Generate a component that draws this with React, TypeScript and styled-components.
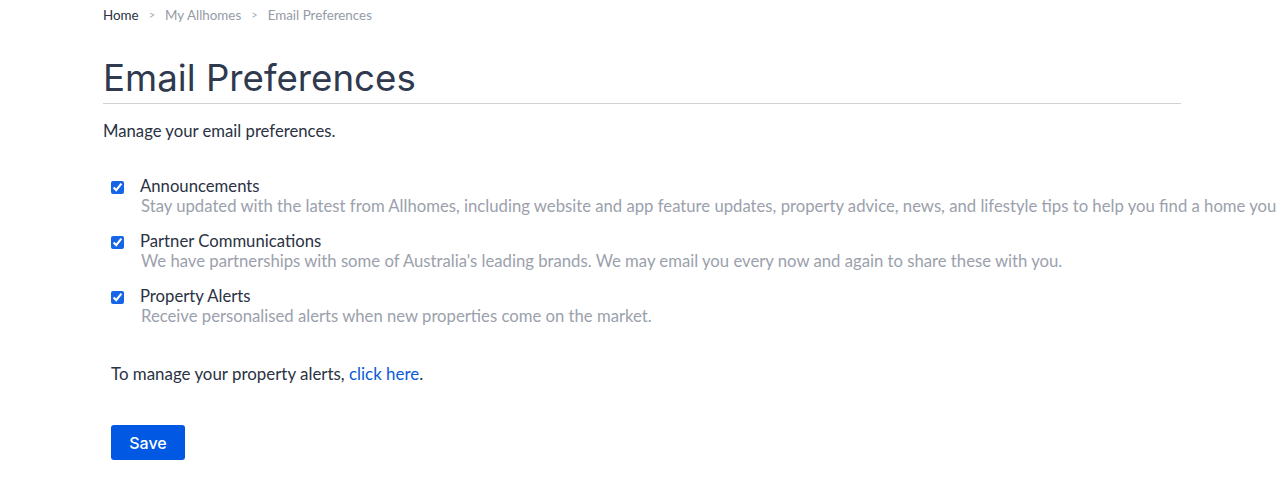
import React from "react";
import styled, { createGlobalStyle } from "styled-components";

const Global = createGlobalStyle`
  html, body { margin: 0; padding: 0; background: #fff; }
  body { font-family: "Lato", "Liberation Sans", sans-serif; color: #2d3748; overflow: hidden; }
`;

const Page = styled.div`
  padding: 0 100px 0 103px;
  width: 1078px;
`;

const Crumbs = styled.nav`
  display: flex;
  align-items: center;
  gap: 10px;
  height: 29px;
  font-size: 13.4px;
  color: #959ba6;
`;

const Crumb = styled.span<{ $active?: boolean }>`
  color: ${(p) => (p.$active ? "#2a3243" : "#959ba6")};
`;

const Sep = styled.span`
  font-size: 11px;
  color: #a7adb6;
`;

const Title = styled.h1`
  margin: 26px 0 0;
  font-family: "Inter", "Liberation Sans", sans-serif;
  font-weight: 400;
  font-size: 36.7px;
  line-height: 46px;
  color: #2f3a4f;
  padding-bottom: 2px;
  border-bottom: 1px solid #cfd2d7;
`;

const Intro = styled.p`
  margin: 15px 0 0;
  font-size: 16.7px;
  line-height: 24px;
  color: #2a3243;
`;

const List = styled.div`
  margin: 33px 0 0 8px;
  display: flex;
  flex-direction: column;
  gap: 15px;
`;

const Option = styled.label`
  display: grid;
  grid-template-columns: 29px 1fr;
  align-items: start;
`;

const Box = styled.input`
  margin: 5px 0 0 0;
  width: 13px;
  height: 13px;
  accent-color: #1565e6;
`;

const Label = styled.div`
  font-size: 16.7px;
  line-height: 20px;
  color: #2a3243;
`;

const Desc = styled.div`
  font-size: 16.7px;
  line-height: 20px;
  color: #9ba1ac;
  white-space: nowrap;
  padding-left: 1px;
`;

const Note = styled.p`
  margin: 36px 0 0 8px;
  font-size: 16.9px;
  line-height: 24px;
  color: #2a3243;
`;

const Link = styled.a`
  color: #0a5bd6;
  text-decoration: none;
`;

const Save = styled.button`
  margin: 39px 0 0 8px;
  width: 74px;
  height: 35px;
  border: none;
  border-radius: 3px;
  background: #0058e3;
  color: #fff;
  font-family: "Inter", "Liberation Sans", sans-serif;
  font-size: 16px;
  font-weight: 500;
  cursor: pointer;
`;

const options = [
  {
    title: "Announcements",
    desc: "Stay updated with the latest from Allhomes, including website and app feature updates, property advice, news, and lifestyle tips to help you find a home you love.",
  },
  {
    title: "Partner Communications",
    desc: "We have partnerships with some of Australia's leading brands. We may email you every now and again to share these with you.",
  },
  {
    title: "Property Alerts",
    desc: "Receive personalised alerts when new properties come on the market.",
  },
];

export default function App() {
  return (
    <>
      <Global />
      <Page>
        <Crumbs>
          <Crumb $active>Home</Crumb>
          <Sep>&gt;</Sep>
          <Crumb>My Allhomes</Crumb>
          <Sep>&gt;</Sep>
          <Crumb>Email Preferences</Crumb>
        </Crumbs>
        <Title>Email Preferences</Title>
        <Intro>Manage your email preferences.</Intro>
        <List>
          {options.map((o) => (
            <Option key={o.title}>
              <Box type="checkbox" defaultChecked />
              <div>
                <Label>{o.title}</Label>
                <Desc>{o.desc}</Desc>
              </div>
            </Option>
          ))}
        </List>
        <Note>
          To manage your property alerts, <Link href="#">click here</Link>.
        </Note>
        <Save>Save</Save>
      </Page>
    </>
  );
}
